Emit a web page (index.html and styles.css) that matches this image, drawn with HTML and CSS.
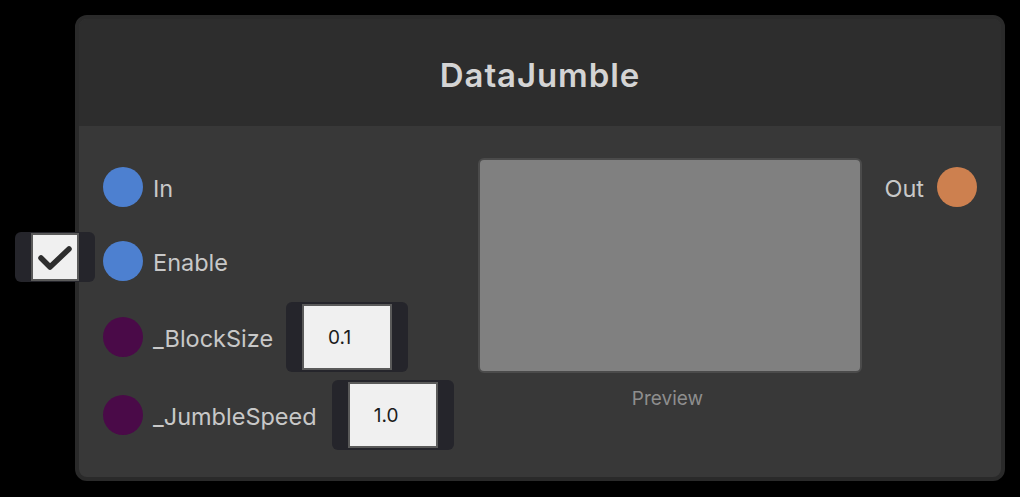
FILE: index.html
```html
<!DOCTYPE html>
<html lang="en">
<head>
  <meta charset="UTF-8" />
  <title>DataJumble</title>
  <link rel="stylesheet" href="styles.css">
</head>
<body>

  <div class="node">
    <div class="node-header">
      <h1 class="node-title">DataJumble</h1>
    </div>

    <div class="node-body">
      <div class="inputs">
        <div class="port-row row-in">
          <span class="port port-vec"></span>
          <span class="port-label">In</span>
        </div>

        <div class="port-row row-enable">
          <div class="toggle-field">
            <div class="checkbox">
              <svg width="44" height="44" viewBox="0 0 44 44">
                <path d="M8 23 L17 32 L36 14" fill="none" stroke="#2e2e2e" stroke-width="5.5" stroke-linecap="round" stroke-linejoin="round"/>
              </svg>
            </div>
          </div>
          <span class="port port-vec"></span>
          <span class="port-label">Enable</span>
        </div>

        <div class="port-row row-field">
          <span class="port port-float"></span>
          <span class="port-label">_BlockSize</span>
          <div class="value-field">
            <input type="text" value="0.1" readonly>
          </div>
        </div>

        <div class="port-row row-field row-last">
          <span class="port port-float"></span>
          <span class="port-label">_JumbleSpeed</span>
          <div class="value-field">
            <input type="text" value="1.0" readonly>
          </div>
        </div>
      </div>

      <div class="preview-col">
        <div class="preview"></div>
        <div class="preview-label">Preview</div>
      </div>

      <div class="outputs">
        <div class="port-row">
          <span class="port-label">Out</span>
          <span class="port port-out"></span>
        </div>
      </div>
    </div>
  </div>

</body>
</html>
```

FILE: styles.css
```css
:root {
  --bg: #000;
  --header-bg: #2d2d2d;
  --body-bg: #383838;
  --label: #c8c8c8;
  --field-bg: #25252b;
  --input-bg: #f0f0f0;
}

body {
  background: var(--bg);
  margin: 0;
  padding: 15px 15px 0 75px;
  font-family: 'Inter', 'Noto Sans', sans-serif;
}

.node {
  width: 922px;
  border: 4px solid #2a2a2a;
  border-radius: 12px;
  background: var(--body-bg);
  overflow: visible;
}

.node-header {
  height: 102px;
  padding-top: 5px;
  background: var(--header-bg);
  border-radius: 8px 8px 0 0;
  display: flex;
  align-items: center;
  justify-content: center;
}

.node-title {
  margin: 0;
  font-size: 33px;
  font-weight: 600;
  color: #d4d4d4;
  letter-spacing: 0.9px;
}

.node-body {
  height: 351px;
  padding: 0 24px;
  display: grid;
  grid-template-columns: 1fr 384px auto;
  column-gap: 22px;
  border-radius: 0 0 8px 8px;
}

.inputs {
  padding-top: 41px;
  display: flex;
  flex-direction: column;
}

.port-row {
  position: relative;
  height: 40px;
  display: flex;
  align-items: center;
}

.row-enable {
  margin-top: 34px;
}

.row-field {
  height: 70px;
  margin-top: 21px;
}

.row-last {
  margin-top: 8px;
}

.port {
  width: 40px;
  height: 40px;
  border-radius: 50%;
  flex-shrink: 0;
}

.port-vec {
  background: #4d80d0;
}

.port-float {
  background: #4a0a48;
}

.port-out {
  background: #cd804f;
}

.port-label {
  font-size: 23.5px;
  color: var(--label);
  margin-left: 10px;
  padding-top: 3px;
}

.outputs .port-label {
  margin-left: 0;
  margin-right: 13px;
}

.outputs {
  padding-top: 41px;
}

.toggle-field {
  position: absolute;
  left: -88px;
  top: -9px;
  width: 48px;
  height: 50px;
  padding: 0 16px;
  background: var(--field-bg);
  border-radius: 6px;
  display: flex;
  align-items: center;
}

.checkbox {
  width: 44px;
  height: 44px;
  background: var(--input-bg);
  border: 2px solid #5a5a5a;
}

.checkbox svg {
  display: block;
}

.value-field {
  margin-left: 13px;
  padding: 2px 16px;
  background: var(--field-bg);
  border-radius: 6px;
}

.row-last .value-field {
  margin-left: 15px;
}

.value-field input {
  display: block;
  box-sizing: border-box;
  width: 90px;
  height: 66px;
  padding: 0 0 0 24px;
  border: 2px solid #5a5a5a;
  background: var(--input-bg);
  font-family: 'Inter', sans-serif;
  font-size: 19px;
  color: #1c1c1c;
  outline: none;
}

.preview-col {
  padding-top: 32px;
  display: flex;
  flex-direction: column;
  align-items: center;
}

.preview {
  box-sizing: border-box;
  width: 384px;
  height: 215px;
  background: #808080;
  border: 2px solid #4b4b4b;
  border-radius: 6px;
}

.preview-label {
  margin-top: 14px;
  font-size: 19px;
  color: #8e8e8e;
  margin-right: 6px;
}
```
